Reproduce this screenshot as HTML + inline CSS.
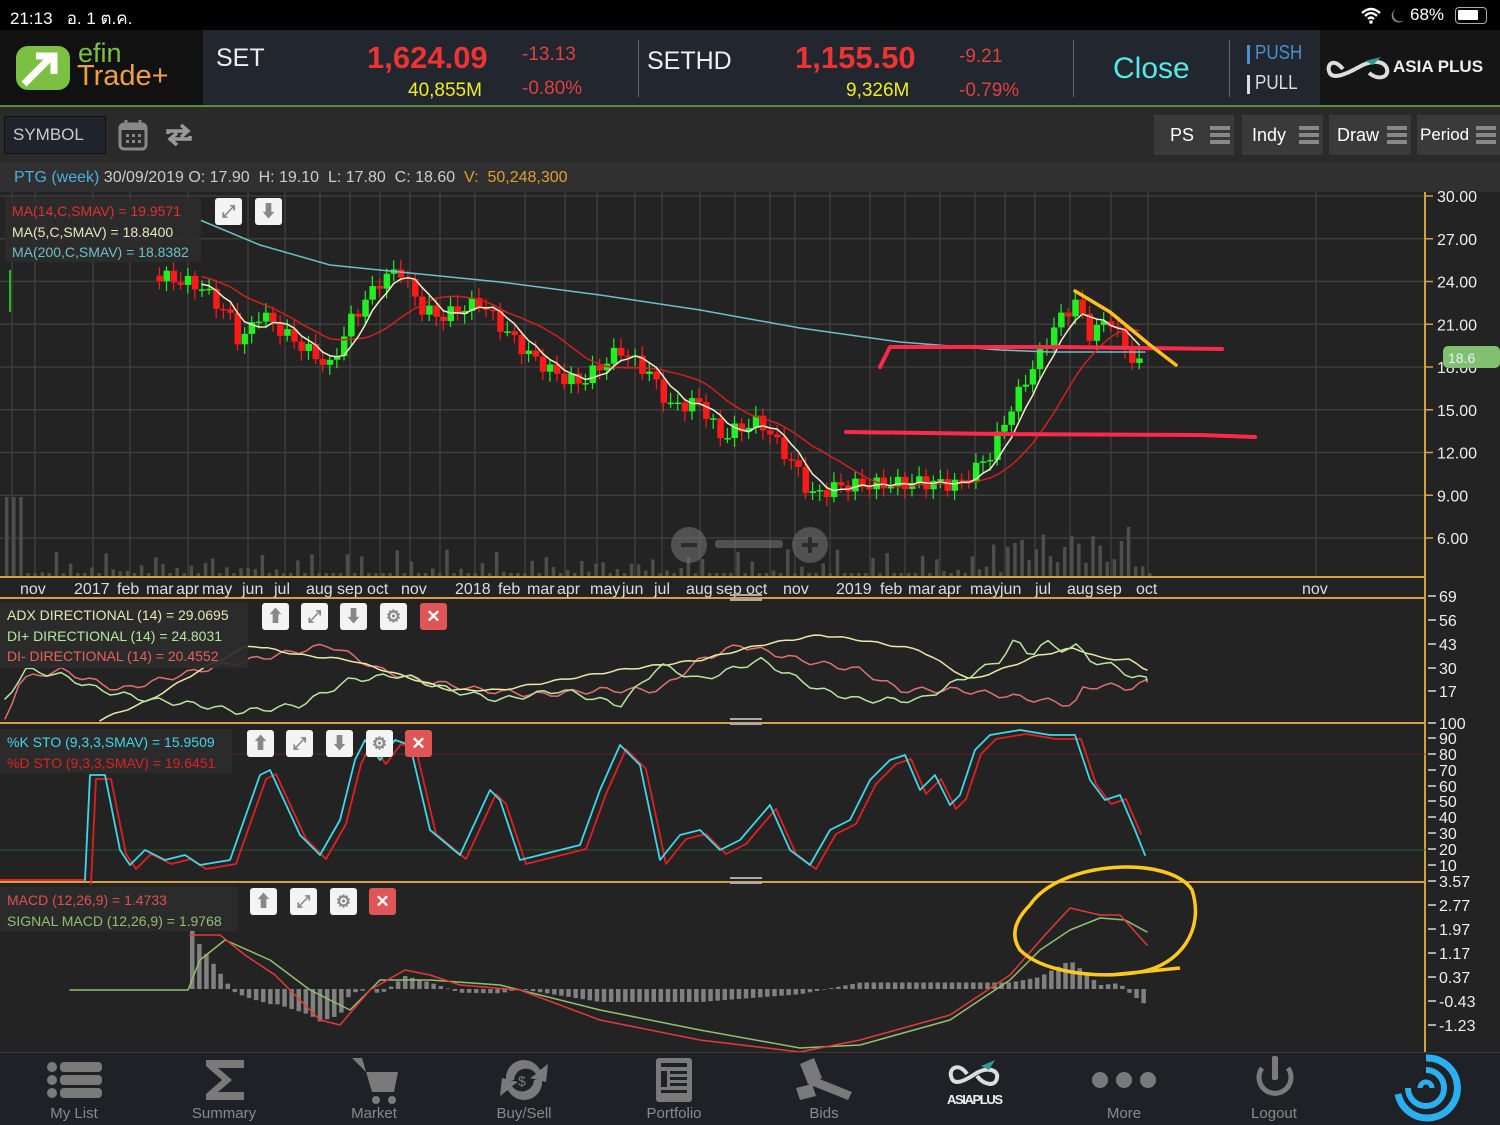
<!DOCTYPE html>
<html><head><meta charset="utf-8">
<style>
*{margin:0;padding:0;box-sizing:border-box}
body{width:1500px;height:1125px;overflow:hidden;background:#232323;font-family:"Liberation Sans","Noto Sans CJK SC",sans-serif;position:relative;color:#ddd}
.a{position:absolute}
.btn{position:absolute;width:27px;height:27px;background:#f4f4f4;border-radius:3px;color:#888;font-size:17px;text-align:center;line-height:27px;font-weight:bold}
.btn.x{background:#e05555;color:#fff}
.leg{position:absolute;background:rgba(44,44,44,.92);font-size:14px;line-height:20.5px;padding:3px 0 0 7px}
.tb{position:absolute;top:115px;height:40px;background:#3a3a3a;color:#fff;font-size:18px;line-height:40px;padding-left:10px}
.tb i{position:absolute;right:4px;top:11px;width:20px;height:4px;background:#888;box-shadow:0 7px 0 #888,0 14px 0 #888}
.nav{position:absolute;top:1105px;font-size:15px;color:#8a8a8a;width:120px;text-align:center}
</style></head><body>
<div class="a" style="left:0;top:0;width:1500px;height:30px;background:#000"></div>
<div class="a" style="left:10px;top:5px;color:#fff;font-size:17px">21:13&nbsp;&nbsp; อ. 1 ต.ค.</div>
<div class="a" style="left:1410px;top:5px;color:#fff;font-size:17px">68%</div>
<div class="a" style="left:1455px;top:7px;width:32px;height:17px;border:1.5px solid #aaa;border-radius:4px"><div style="margin:2px;width:20px;height:10px;background:#fff;border-radius:1px"></div></div>
<svg class="a" style="left:1360px;top:6px" width="46" height="18"><path d="M2 7 Q11 -1 20 7 M5 10 Q11 4 17 10 M8 13 Q11 10 14 13" stroke="#fff" stroke-width="2.3" fill="none"/><circle cx="11" cy="16" r="1.8" fill="#fff"/><path d="M36 3 A7 7 0 1 0 44 14 A6 6 0 0 1 36 3Z" fill="#888"/></svg>
<div class="a" style="left:0;top:30px;width:203px;height:75px;background:#111"></div>
<div class="a" style="left:203px;top:30px;width:1117px;height:75px;background:#22262e"></div>
<div class="a" style="left:1320px;top:30px;width:180px;height:75px;background:#151515"></div>
<div class="a" style="left:0;top:105px;width:1500px;height:2px;background:#5a8a3a"></div>
<svg class="a" style="left:14px;top:44px" width="60" height="48"><rect x="2" y="2" width="54" height="44" rx="12" fill="#7bc043"/><path d="M10 40 L36 14 M22 12 H40 V30" stroke="#fff" stroke-width="7" fill="none"/></svg>
<div class="a" style="left:78px;top:38px;font-size:27px;color:#7bc043">efin</div>
<div class="a" style="left:77px;top:60px;font-size:29px;color:#f0a040">Trade+</div>
<div class="a" style="left:216px;top:44px;font-size:25px;color:#eee">SET</div>
<div class="a" style="left:367px;top:40px;font-size:31px;font-weight:bold;color:#ee3333">1,624.09</div>
<div class="a" style="left:522px;top:44px;font-size:19px;color:#e04040">-13.13</div>
<div class="a" style="left:408px;top:80px;font-size:19px;color:#eeee22">40,855M</div>
<div class="a" style="left:522px;top:78px;font-size:19px;color:#e04040">-0.80%</div>
<div class="a" style="left:638px;top:40px;width:1px;height:57px;background:#666"></div>
<div class="a" style="left:647px;top:47px;font-size:25px;color:#eee">SETHD</div>
<div class="a" style="left:795px;top:40px;font-size:31px;font-weight:bold;color:#ee3333">1,155.50</div>
<div class="a" style="left:959px;top:46px;font-size:19px;color:#e04040">-9.21</div>
<div class="a" style="left:846px;top:80px;font-size:19px;color:#eeee22">9,326M</div>
<div class="a" style="left:959px;top:80px;font-size:19px;color:#e04040">-0.79%</div>
<div class="a" style="left:1073px;top:40px;width:1px;height:57px;background:#666"></div>
<div class="a" style="left:1113px;top:52px;font-size:30px;color:#55e8e8">Close</div>
<div class="a" style="left:1229px;top:40px;width:1px;height:57px;background:#666"></div>
<div class="a" style="left:1247px;top:45px;width:3px;height:19px;background:#4a90d0"></div>
<div class="a" style="left:1255px;top:42px;font-size:20px;color:#4a90d0;transform:scaleX(.85);transform-origin:left">PUSH</div>
<div class="a" style="left:1247px;top:75px;width:3px;height:19px;background:#ddd"></div>
<div class="a" style="left:1255px;top:72px;font-size:20px;color:#ddd;transform:scaleX(.85);transform-origin:left">PULL</div>
<svg class="a" style="left:1325px;top:55px" width="70" height="30"><path d="M18 14 C8 2 2 10 4 16 C6 24 16 22 34 12 C48 4 60 6 62 14 C64 22 54 26 44 18" stroke="#ddd" stroke-width="4" fill="none"/><path d="M40 6 L56 2 L48 10Z" fill="#2a9d8f"/></svg>
<div class="a" style="left:1393px;top:57px;font-size:17px;font-weight:bold;color:#eee">ASIA PLUS</div>
<div class="a" style="left:0;top:107px;width:1500px;height:55px;background:#2a2a2a"></div>
<div class="a" style="left:4px;top:116px;width:102px;height:38px;background:#1f232b;border:1px solid #111;color:#ccc;font-size:17px;line-height:36px;padding-left:8px">SYMBOL</div>
<svg class="a" style="left:118px;top:119px" width="30" height="32"><rect x="2" y="5" width="26" height="25" rx="4" fill="none" stroke="#888" stroke-width="3"/><rect x="2" y="5" width="26" height="6" fill="#888"/><path d="M8 1v7M22 1v7" stroke="#888" stroke-width="3"/><g fill="#888"><rect x="8" y="15" width="3" height="3"/><rect x="14" y="15" width="3" height="3"/><rect x="20" y="15" width="3" height="3"/><rect x="8" y="21" width="3" height="3"/><rect x="14" y="21" width="3" height="3"/><rect x="20" y="21" width="3" height="3"/></g></svg>
<svg class="a" style="left:164px;top:122px" width="30" height="26"><path d="M4 12 V9 H22 M17 3 L24 9 L17 15 M26 14 V17 H8 M13 11 L6 17 L13 23" stroke="#999" stroke-width="3.5" fill="none"/></svg>
<div class="tb" style="left:1154px;width:80px;padding-left:16px">PS<i></i></div>
<div class="tb" style="left:1242px;width:81px">Indy<i></i></div>
<div class="tb" style="left:1329px;width:82px;padding-left:8px">Draw<i></i></div>
<div class="tb" style="left:1417px;width:83px;padding-left:3px;font-size:17px">Period<i></i></div>
<div class="a" style="left:0;top:162px;width:1500px;height:30px;background:#303030"></div>
<div class="a" style="left:14px;top:169px;font-size:16px;color:#ccc;white-space:nowrap"><span style="color:#4ab0e0">PTG (week)</span> 30/09/2019 O: 17.90 &nbsp;H: 19.10 &nbsp;L: 17.80 &nbsp;C: 18.60 &nbsp;<span style="color:#e0a030">V: &nbsp;50,248,300</span></div>

<svg id="ch" class="a" style="left:0;top:0" width="1500" height="1125"></svg>

<div class="leg" style="left:5px;top:198px;width:196px;height:64px"><div style="color:#e03030">MA(14,C,SMAV) = 19.9571</div><div style="color:#e8e8c0">MA(5,C,SMAV) = 18.8400</div><div style="color:#6cc0c8">MA(200,C,SMAV) = 18.8382</div></div>
<div class="btn" style="left:215px;top:198px">⤢</div><div class="btn" style="left:255px;top:198px">⬇</div>
<div class="leg" style="left:0;top:602px;width:248px;height:66px"><div style="color:#e8e8b0">ADX DIRECTIONAL (14) = 29.0695</div><div style="color:#b8e6a0">DI+ DIRECTIONAL (14) = 24.8031</div><div style="color:#e86060">DI- DIRECTIONAL (14) = 20.4552</div></div>
<div class="btn" style="left:262px;top:603px">⬆</div><div class="btn" style="left:301px;top:603px">⤢</div><div class="btn" style="left:340px;top:603px">⬇</div><div class="btn" style="left:380px;top:603px">⚙</div><div class="btn x" style="left:420px;top:603px">✕</div>
<div class="leg" style="left:0;top:729px;width:232px;height:44px"><div style="color:#40d8e8">%K STO (9,3,3,SMAV) = 15.9509</div><div style="color:#e02020">%D STO (9,3,3,SMAV) = 19.6451</div></div>
<div class="btn" style="left:247px;top:730px">⬆</div><div class="btn" style="left:286px;top:730px">⤢</div><div class="btn" style="left:326px;top:730px">⬇</div><div class="btn" style="left:366px;top:730px">⚙</div><div class="btn x" style="left:405px;top:730px">✕</div>
<div class="leg" style="left:0;top:887px;width:238px;height:44px"><div style="color:#e05050">MACD (12,26,9) = 1.4733</div><div style="color:#90c070">SIGNAL MACD (12,26,9) = 1.9768</div></div>
<div class="btn" style="left:250px;top:888px">⬆</div><div class="btn" style="left:290px;top:888px">⤢</div><div class="btn" style="left:330px;top:888px">⚙</div><div class="btn x" style="left:369px;top:888px">✕</div>

<div class="a" style="left:0;top:1052px;width:1500px;height:73px;background:#1f2127;border-top:1px solid #3a3a3a"></div>
<svg class="a" style="left:0;top:1052px" width="1500" height="55" fill="#7a7a7a">
<g><circle cx="52" cy="15" r="5"/><circle cx="52" cy="28" r="5"/><circle cx="52" cy="41" r="5"/><rect x="60" y="10" width="42" height="10" rx="4"/><rect x="60" y="23" width="42" height="10" rx="4"/><rect x="60" y="36" width="42" height="10" rx="4"/></g>
<path d="M206 8 H244 V16 H218 L232 28 L218 40 H244 V48 H206 V42 L222 28 L206 14Z"/>
<path d="M352 6 H362 L372 40 H394 L398 20 H366Z"/><circle cx="376" cy="48" r="4"/><circle cx="392" cy="48" r="4"/>
<path d="M506 28 A18 18 0 0 1 540 18 L548 12 L546 30 L530 26 L536 22 A12 12 0 0 0 514 28Z M542 28 A18 18 0 0 1 508 38 L500 44 L502 26 L518 30 L512 34 A12 12 0 0 0 534 28Z"/><text x="518" y="34" font-size="14" fill="#7a7a7a" font-family="Liberation Sans">$</text>
<rect x="656" y="6" width="36" height="44" rx="3"/><g fill="#1f2127"><rect x="661" y="11" width="26" height="4"/><rect x="661" y="19" width="6" height="16"/><rect x="670" y="19" width="17" height="3"/><rect x="670" y="25" width="17" height="3"/><rect x="670" y="31" width="17" height="3"/><rect x="661" y="38" width="26" height="3"/></g>
<path d="M800 12 L814 6 L822 26 L808 32Z M812 24 L852 40 L848 48 L808 32Z M796 36 L812 32 L816 44 L800 48Z"/>
<circle cx="1100" cy="28" r="8"/><circle cx="1124" cy="28" r="8"/><circle cx="1148" cy="28" r="8"/>
<path d="M1262 16 A16 16 0 1 0 1288 16" stroke="#7a7a7a" stroke-width="5" fill="none"/><rect x="1272" y="4" width="6" height="24" rx="2"/>
</svg>
<svg class="a" style="left:945px;top:1058px" width="60" height="48"><path d="M22 16 C14 4 4 10 6 18 C8 28 18 24 30 16 C42 8 54 12 52 20 C50 30 38 26 32 18" stroke="#ddd" stroke-width="4" fill="none"/><path d="M36 8 L50 2 L44 12Z" fill="#2a9d8f"/><text x="2" y="46" font-size="13" font-weight="bold" fill="#eee" font-family="Liberation Sans" textLength="56">ASIAPLUS</text></svg>
<svg class="a" style="left:1390px;top:1052px" width="72" height="70"><path d="M36 6 A30 30 0 1 1 8 42" stroke="#2ab0f0" stroke-width="7" fill="none"/><path d="M36 18 A18 18 0 1 1 18 36" stroke="#2ab0f0" stroke-width="6" fill="none"/><path d="M30 36 A6 6 0 1 1 42 36" stroke="#2ab0f0" stroke-width="5" fill="none"/></svg>
<div class="nav" style="left:14px">My List</div><div class="nav" style="left:164px">Summary</div><div class="nav" style="left:314px">Market</div><div class="nav" style="left:464px">Buy/Sell</div><div class="nav" style="left:614px">Portfolio</div><div class="nav" style="left:764px">Bids</div><div class="nav" style="left:1064px">More</div><div class="nav" style="left:1214px">Logout</div>

<script>
(function(){
var s='',NS=document.getElementById('ch');
function L(x1,y1,x2,y2,c,w){s+='<line x1="'+x1+'" y1="'+y1+'" x2="'+x2+'" y2="'+y2+'" stroke="'+c+'" stroke-width="'+(w||1)+'"/>';}
function P(pts,c,w,extra){s+='<polyline points="'+pts.map(function(p){return p[0].toFixed(1)+','+p[1].toFixed(1)}).join(' ')+'" fill="none" stroke="'+c+'" stroke-width="'+(w||1.5)+'" stroke-linejoin="round" stroke-linecap="round" '+(extra||'')+'/>';}
function T(x,y,t,c,sz,anc){s+='<text x="'+x+'" y="'+y+'" fill="'+c+'" font-size="'+(sz||16)+'" font-family="Liberation Sans" '+(anc?'text-anchor="'+anc+'"':'')+'>'+t+'</text>';}
function R(x,y,w,h,c){s+='<rect x="'+x+'" y="'+y+'" width="'+w+'" height="'+h+'" fill="'+c+'"/>';}
function interp(k,x){if(x<=k[0][0])return k[0][1];for(var i=1;i<k.length;i++){if(x<=k[i][0]){var a=k[i-1],b=k[i];return a[1]+(b[1]-a[1])*(x-a[0])/(b[0]-a[0]);}}return k[k.length-1][1];}
var Y=function(p){return 196+(30-p)*14.25;};
var vx=[12,35,93,130,188,248,285,320,350,380,410,440,475,525,565,597,635,662,700,735,770,795,830,870,905,940,975,1005,1035,1070,1111,1148,1316];
vx.forEach(function(x){L(x,192,x,577,'#3d3d3d',1.5);});
for(var p=30;p>=6;p-=3){L(0,Y(p),1425,Y(p),'#3d3d3d',1.5);}
for(var x=5;x<1150;x+=7.1){var h=4+Math.max(0,Math.sin(x*0.37)*14+Math.sin(x*0.13)*10);if(x<20)h=80;if(x>990&&x<1140)h+=Math.abs(Math.sin(x))*30;R(x,577-h,3.5,h,'#4e4e4e');}
var kp=[[120,25.5],[160,25],[200,24],[230,21.5],[240,19.5],[260,21.5],[290,19.5],[330,17.3],[350,20.5],[380,23.5],[400,24.5],[420,22],[440,21.5],[480,23],[500,21.5],[530,19.5],[560,18],[580,17.5],[620,19.5],[650,17.5],[670,15],[700,15],[720,12.5],[760,13.5],[800,10],[810,8.5],[840,9.5],[880,10],[920,10.5],[960,10.5],[990,12.5],[1010,15.5],[1030,18],[1055,21],[1075,22.5],[1090,20],[1110,21],[1130,18],[1145,18.6]];
var cl=[],xs=[];
for(var x=60;x<=1146;x+=7.1){xs.push(x);cl.push(interp(kp,x)+Math.sin(x*0.9)*0.7+Math.sin(x*0.31)*0.5);}
cl[cl.length-1]=18.6;
var ma5=[],ma14=[];
for(var i=0;i<cl.length;i++){var a=0,n=0;for(var j=Math.max(0,i-4);j<=i;j++){a+=cl[j];n++;}ma5.push(a/n);a=0;n=0;for(j=Math.max(0,i-13);j<=i;j++){a+=cl[j];n++;}ma14.push(a/n);}
for(i=1;i<cl.length;i++){var x=xs[i];if(x<158)continue;var o=cl[i-1],c=cl[i];var col=c>=o?'#22ee22':'#ff1a1a';var hi=Math.max(o,c)+0.3+Math.abs(Math.sin(x))*0.4,lo=Math.min(o,c)-0.3-Math.abs(Math.cos(x))*0.4;
L(x,Y(hi),x,Y(lo),col,1.2);var t=Y(Math.max(o,c)),b=Y(Math.min(o,c));R(x-3,t,6.5,Math.max(1.5,b-t),col);}
L(10,270,10,312,'#22ee22',1.5);
P([[200,220],[260,245],[330,265],[400,272],[500,282],[600,295],[700,310],[800,328],[900,342],[1000,350],[1050,352],[1145,352]],'#6cc0c8',1.5);
var m14=[],m5=[];for(i=0;i<xs.length;i++){if(xs[i]>=200){m14.push([xs[i],Y(ma14[i])]);}if(xs[i]>=195)m5.push([xs[i],Y(ma5[i])]);}
P(m14,'#d02020',1.5);P(m5,'#f0f0c8',1.5);
P([[880,367],[890,347],[1060,347],[1222,349]],'#ff2a4a',4);
P([[846,432],[1000,434],[1200,435],[1255,437]],'#ff2a4a',4);
P([[1075,291],[1110,312],[1150,345],[1176,365]],'#ffc020',3.5);
s+='<g opacity="0.55"><circle cx="689" cy="545" r="18" fill="#777"/><circle cx="810" cy="545" r="18" fill="#777"/><rect x="715" y="540" width="68" height="8" rx="3" fill="#777"/><rect x="681" y="543" width="16" height="4" fill="#333"/><rect x="802" y="543" width="16" height="4" fill="#333"/><rect x="808" y="537" width="4" height="16" fill="#333"/></g>';
L(1425,192,1425,1052,'#d4a040',2);
[577,598,723,882].forEach(function(y){L(0,y,1425,y,'#d4a040',2);});
for(p=30;p>=6;p-=3){L(1425,Y(p),1433,Y(p),'#d4a040',1.5);T(1437,Y(p)+6,p.toFixed(2),'#eee',16);}
s+='<rect x="1443" y="346" width="57" height="22" rx="5" fill="#80c070"/>';T(1448,363,'18.6','#eef',14);
var ml=[[20,'nov'],[74,'2017'],[117,'feb'],[146,'mar'],[176,'apr'],[202,'may'],[242,'jun'],[274,'jul'],[306,'aug'],[337,'sep'],[367,'oct'],[401,'nov'],[455,'2018'],[498,'feb'],[527,'mar'],[557,'apr'],[590,'may'],[622,'jun'],[654,'jul'],[686,'aug'],[716,'sep'],[746,'oct'],[783,'nov'],[836,'2019'],[880,'feb'],[908,'mar'],[938,'apr'],[970,'may'],[1000,'jun'],[1035,'jul'],[1067,'aug'],[1096,'sep'],[1136,'oct'],[1302,'nov']];
ml.forEach(function(m){T(m[0],594,m[1],'#ddd',16);});
[[69,596],[56,620],[43,644],[30,668],[17,691]].forEach(function(v){L(1428,v[1],1436,v[1],'#ddd',1.5);T(1439,v[1]+6,v[0],'#eee',16);});
var dip=[[5,700],[25,670],[60,675],[100,690],[150,700],[200,705],[240,712],[300,705],[350,680],[400,675],[450,690],[500,700],[560,690],[620,705],[660,665],[700,680],[760,660],[820,690],[860,700],[920,700],[960,680],[1000,660],[1015,640],[1030,655],[1045,642],[1060,650],[1075,645],[1090,660],[1110,665],[1130,675],[1147,680]];
var adx=[[100,720],[150,700],[200,670],[250,645],[300,655],[350,660],[400,675],[450,690],[500,690],[560,680],[620,670],[700,660],[760,645],[820,635],[860,640],[920,650],[970,680],[1000,670],[1040,655],[1075,648],[1100,658],[1130,660],[1147,670]];
var dim=[[5,720],[20,680],[60,670],[120,690],[200,670],[250,660],[330,645],[380,670],[420,680],[480,690],[540,695],[600,690],[660,690],[700,660],[740,645],[800,660],[860,670],[900,690],[960,690],[1000,695],[1040,700],[1075,705],[1080,690],[1100,685],[1130,688],[1147,682]];
function jag(k,amp){var o=[];for(var x=k[0][0];x<=k[k.length-1][0];x+=7){o.push([x,interp(k,x)+Math.sin(x*0.7)*amp]);}o.push(k[k.length-1]);return o;}
P(jag(dim,3),'#e07070',1.5);P(jag(adx,1),'#e8e8a8',1.5);P(jag(dip,3),'#b8e6a0',1.5);
[[100,723],[90,738],[80,754],[70,770],[60,786],[50,801],[40,817],[30,833],[20,849],[10,865],[3.57,881]].forEach(function(v){L(1428,v[1],1436,v[1],'#ddd',1.5);T(1439,v[1]+6,v[0],'#eee',16);});
L(0,754,1425,754,'#5a2030',1);L(0,850,1425,850,'#2a5a2a',1);
var sto=[[85,880],[90,775],[105,775],[120,850],[130,865],[145,850],[165,860],[185,855],[200,865],[230,860],[260,775],[270,770],[300,835],[320,855],[340,820],[355,760],[365,740],[380,760],[395,740],[410,745],[430,830],[460,855],[490,790],[500,800],[520,860],[540,855],[560,850],[580,845],[600,790],[620,745],[640,765],[660,860],[680,835],[700,830],[720,850],[740,840],[770,805],[790,850],[810,865],[830,830],[850,820],[870,780],[890,760],[905,755],[920,790],[935,775],[950,805],[960,795],[975,750],[990,735],[1020,730],[1050,735],[1075,735],[1090,780],[1105,800],[1120,795],[1135,830],[1145,855]];
P([[0,880],[85,880]],'#e02020',2);
P(sto.map(function(p){return [p[0]+6,p[1]+4]}).filter(function(p){return p[0]<=1147}),'#e02020',1.8);
P(sto,'#40d8e8',1.8);
[[2.77,905],[1.97,929],[1.17,953],[0.37,977],[-0.43,1001],[-1.23,1025]].forEach(function(v){L(1428,v[1],1436,v[1],'#ddd',1.5);T(1439,v[1]+6,v[0].toFixed(2),'#eee',16);});
var sig=[[70,990],[188,990],[200,960],[225,940],[270,960],[310,990],[350,1010],[380,980],[430,980],[500,985],[600,1010],[700,1030],[800,1048],[860,1045],[950,1020],[1010,980],[1040,950],[1070,930],[1100,918],[1125,920],[1147,932]];
var mac=[[190,935],[220,935],[245,955],[275,975],[320,1020],[340,1025],[370,990],[405,970],[430,975],[460,985],[520,990],[600,1020],[700,1040],[800,1052],[860,1040],[950,1015],[1010,975],[1045,935],[1070,908],[1100,915],[1120,915],[1147,945]];
for(var x=192;x<=1146;x+=7.1){var d=(interp(sig,x)-interp(mac,x))*1.3;if(x<230)d=Math.max(d,55-(x-192)*1.4);var y0=989;if(d>0)R(x-2,y0-d,4.5,d,'#808080');else R(x-2,y0,4.5,-d,'#808080');}
P(sig,'#90c070',1.5);P(mac,'#e03a3a',1.5);
s+='<path d="M1030 905 C1060 860 1170 855 1192 890 C1205 930 1180 965 1140 972 C1090 980 1040 970 1020 950 C1010 935 1015 920 1030 905 M1110 975 L1180 968" stroke="#ffc820" stroke-width="3.5" fill="none"/>';
[598,722,881].forEach(function(y){R(730,y-4,32,2,'#aaa');R(730,y+1,32,2,'#aaa');});
NS.innerHTML=s;
})();
</script>
</body></html>
